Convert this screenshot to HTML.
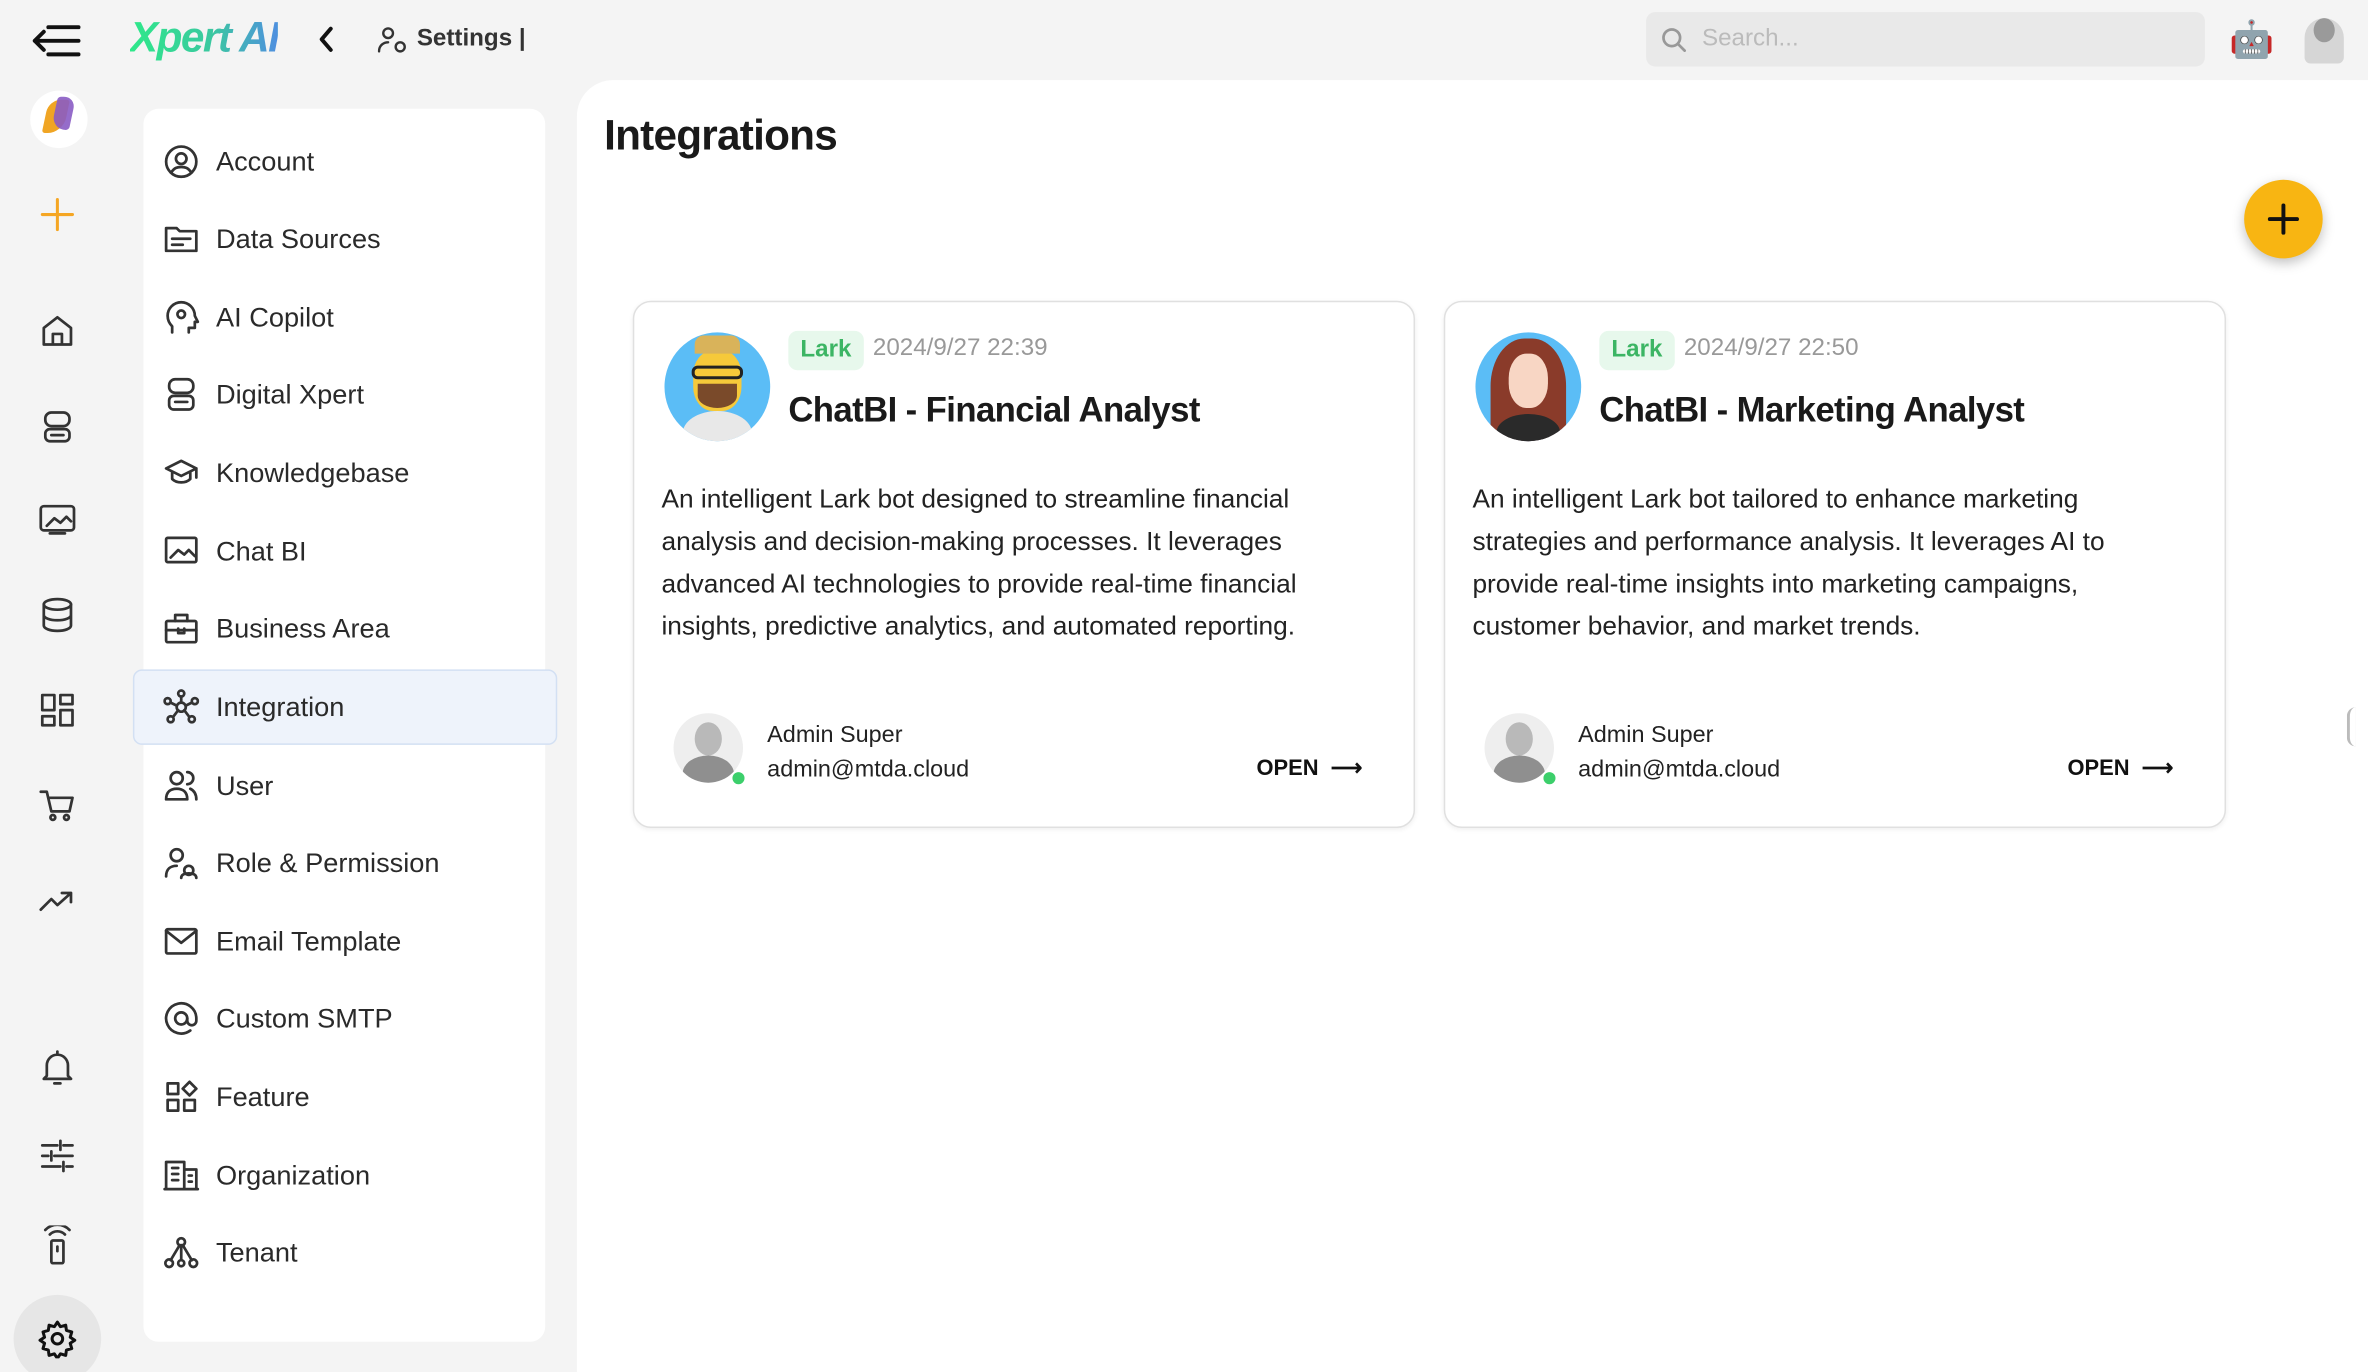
<!DOCTYPE html>
<html><head><meta charset="utf-8"><style>
*{box-sizing:border-box;margin:0;padding:0}
html,body{width:2368px;height:1372px;overflow:hidden;background:#f4f4f4}
#w{width:1568px;height:908px;transform:scale(1.5102,1.511);transform-origin:0 0;position:relative;font-family:"Liberation Sans",sans-serif;color:#222;background:#f4f4f4}
.a{position:absolute}
svg{fill:none;stroke:#333;stroke-width:1.8;stroke-linecap:round;stroke-linejoin:round}
.rail svg{position:absolute;left:25px;width:26px;height:26px}
.nav{left:95px;top:72px;width:266px;height:816px;background:#fff;border-radius:10px}
.it{position:absolute;left:13px;height:40px;display:flex;align-items:center;font-size:18px;color:#2a2a2a}
.it svg{width:24px;height:24px;margin-right:11px}
.main{left:382px;top:53px;width:1186px;height:855px;background:#fff;border-top-left-radius:24px}
.card{position:absolute;top:199px;width:518px;height:349px;border:1.5px solid #e0e0e0;border-radius:12px;background:#fff;box-shadow:0 1px 3px rgba(0,0,0,.06)}
.tag{position:absolute;left:102px;top:19px;background:#e7f8ec;color:#3cb564;font-weight:bold;font-size:16px;padding:4px 8px;border-radius:6px}
.date{position:absolute;left:158px;top:22px;color:#999;font-size:16px}
.ttl{position:absolute;left:102px;top:58px;font-weight:bold;font-size:23px;letter-spacing:-.4px;color:#1a1a1a}
.desc{position:absolute;left:18px;top:116px;width:470px;font-size:17.4px;line-height:28px;color:#222}
.who{position:absolute;left:88px;top:275px;font-size:15.5px;line-height:23px;color:#222}
.open{position:absolute;left:412px;top:301px;font-weight:bold;font-size:14.5px;color:#111}
.av{position:absolute;left:26px;top:272px;width:46px;height:46px;border-radius:50%;background:#eee;overflow:hidden}
.dot{position:absolute;left:64px;top:310px;width:10px;height:10px;border-radius:50%;background:#3ccf6b;border:1.5px solid #fff}
.face{position:absolute;left:20px;top:20px;width:70px;height:72px;border-radius:50%;overflow:hidden}
</style></head><body><div id="w">
<!-- top bar -->
<svg class="a" style="left:20px;top:16px;width:34px;height:22px;stroke:#111;stroke-width:2.6" viewBox="0 0 34 22"><path d="M12 2H32M3 11H32M12 20H32M3 11L9 5M3 11l6 6"/></svg>
<div class="a" style="left:86px;top:9px;font-size:28px;font-weight:bold;font-style:italic;letter-spacing:-1px;background:linear-gradient(90deg,#2fe88a,#3bc8a0 55%,#4f8fe0);-webkit-background-clip:text;color:transparent">Xpert AI</div>
<svg class="a" style="left:208px;top:16px;width:16px;height:20px;stroke:#111;stroke-width:2.6" viewBox="0 0 16 20"><path d="M11 3L5 10l6 7"/></svg>
<svg class="a" style="left:250px;top:17px;width:22px;height:20px;stroke-width:1.6" viewBox="0 0 22 20"><circle cx="7" cy="5" r="3.2"/><path d="M1 17c0-4 3-6 6-6"/><circle cx="15" cy="14" r="3"/></svg>
<div class="a" style="left:276px;top:17px;font-size:16px;font-weight:bold;color:#333">Settings |</div>
<div class="a" style="left:1090px;top:8px;width:370px;height:36px;background:#e9e9e9;border-radius:6px"></div>
<svg class="a" style="left:1100px;top:18px;width:17px;height:17px;stroke:#999" viewBox="0 0 17 17"><circle cx="7" cy="7" r="5.5"/><path d="M11 11l4.5 4.5"/></svg>
<div class="a" style="left:1127px;top:17px;font-size:16px;color:#bbb">Search...</div>
<div class="a" style="left:1476px;top:14px;width:28px;height:26px;font-size:24px;line-height:26px">🤖</div>
<div class="a" style="left:1526px;top:12px;width:26px;height:30px;border-radius:13px 13px 4px 4px;background:#d6d6d6"></div>
<div class="a" style="left:1532px;top:12px;width:14px;height:16px;border-radius:50%;background:#9a9a9a"></div>
<!-- rail -->
<div class="rail">
<div class="a" style="left:20px;top:60px;width:38px;height:38px;border-radius:50%;background:#fff"></div>
<div class="a" style="left:30px;top:66px;width:14px;height:22px;background:#f0a524;border-radius:8px 2px 10px 2px;transform:skewX(-12deg)"></div>
<div class="a" style="left:36px;top:64px;width:12px;height:22px;background:#8a5cc4;border-radius:2px 8px 2px 10px;transform:skewX(-12deg);opacity:.9"></div>
<svg style="top:129px;stroke:#f5a623;stroke-width:2" viewBox="0 0 26 26"><path d="M13 3v20M3 13h20"/></svg>
<svg style="top:206px" viewBox="0 0 26 26"><path d="M4 11l9-7 9 7v11H4zM10 22v-7h6v7"/></svg>
<svg style="top:269px" viewBox="0 0 26 26"><rect x="5" y="4" width="16" height="9" rx="4"/><rect x="5" y="15" width="16" height="8" rx="3"/><path d="M9 19h8"/></svg>
<svg style="top:331px" viewBox="0 0 26 26"><rect x="2" y="4" width="22" height="16" rx="2"/><path d="M6 17l5-5 4 3 4-4 3 3M8 22h10"/></svg>
<svg style="top:394px" viewBox="0 0 26 26"><ellipse cx="13" cy="6" rx="9" ry="3.5"/><path d="M4 6v14c0 2 4 3.5 9 3.5s9-1.5 9-3.5V6M4 13c0 2 4 3.5 9 3.5s9-1.5 9-3.5"/></svg>
<svg style="top:457px" viewBox="0 0 26 26"><rect x="3" y="3" width="8" height="10"/><rect x="15" y="3" width="8" height="6"/><rect x="3" y="17" width="8" height="6"/><rect x="15" y="13" width="8" height="10"/></svg>
<svg style="top:520px" viewBox="0 0 26 26"><path d="M2 4h4l3 13h12l2-9H8"/><circle cx="10" cy="21" r="1.6"/><circle cx="19" cy="21" r="1.6"/></svg>
<svg style="top:583px" viewBox="0 0 26 26"><path d="M2 19l7-7 4 4 9-8M16 8h6v6"/></svg>
<svg style="top:694px" viewBox="0 0 26 26"><path d="M6 18V11a7 7 0 0114 0v7l2 2H4zM11 23h4M13 2v2"/></svg>
<svg style="top:752px" viewBox="0 0 26 26"><path d="M3 6h10M17 6h6M3 13h4M11 13h12M3 20h12M19 20h4M15 3v6M9 10v6M17 17v6"/></svg>
<svg style="top:811px" viewBox="0 0 26 26"><rect x="9" y="10" width="8" height="15" rx="1"/><path d="M13 14v3M8 6a7 7 0 0110 0M5 3a11 11 0 0116 0"/></svg>
<div class="a" style="left:9px;top:857px;width:58px;height:58px;border-radius:50%;background:#e6e6e6"></div>
<svg style="top:873px;stroke:#111;stroke-width:2" viewBox="0 0 26 26"><circle cx="13" cy="13" r="3.5"/><path d="M13 2l2 3 3.5-1 .5 3.5 3.5 1-1 3.5 3 2-3 2 1 3.5-3.5 1-.5 3.5-3.5-1-2 3-2-3-3.5 1-.5-3.5-3.5-1 1-3.5-3-2 3-2-1-3.5 3.5-1 .5-3.5 3.5 1z"/></svg>
</div>
<!-- nav -->
<div class="a nav">
<div class="a" style="left:-7px;top:371px;width:281px;height:50px;background:#eef3fb;border:1.5px solid #d3e0f3;border-radius:6px"></div>
<div class="it" style="top:15px"><svg viewBox="0 0 24 24"><circle cx="12" cy="12" r="10"/><circle cx="12" cy="10" r="3.5"/><path d="M5.5 19c2-3 4-3.5 6.5-3.5s4.5.5 6.5 3.5"/></svg>Account</div>
<div class="it" style="top:66px"><svg viewBox="0 0 24 24"><path d="M2 5h7l2 2h11v13H2z"/><path d="M6 12h12M6 16h7"/></svg>Data Sources</div>
<div class="it" style="top:118px"><svg viewBox="0 0 24 24"><path d="M6 22v-4c-2-2-3-4-3-7a9 9 0 0118 0l2 4h-2v4h-4v3"/><circle cx="12" cy="10" r="2.5"/></svg>AI Copilot</div>
<div class="it" style="top:169px"><svg viewBox="0 0 24 24"><rect x="4" y="2" width="16" height="9" rx="4"/><rect x="4" y="13" width="16" height="9" rx="3"/><path d="M8 17h8"/></svg>Digital Xpert</div>
<div class="it" style="top:221px"><svg viewBox="0 0 24 24"><path d="M12 4l10 5-10 5L2 9zM6 11v5c3 3 9 3 12 0v-5M22 9v6"/></svg>Knowledgebase</div>
<div class="it" style="top:273px"><svg viewBox="0 0 24 24"><rect x="2" y="3" width="20" height="16" rx="1"/><path d="M5 16l5-5 4 3 3-3 4 4"/></svg>Chat BI</div>
<div class="it" style="top:324px"><svg viewBox="0 0 24 24"><rect x="2" y="7" width="20" height="14" rx="1"/><path d="M8 7V3h8v4M2 13h20M10 12v3h4v-3"/></svg>Business Area</div>
<div class="it" style="top:376px"><svg viewBox="0 0 24 24"><circle cx="12" cy="12" r="3"/><circle cx="12" cy="3" r="2"/><circle cx="3" cy="8" r="2"/><circle cx="21" cy="8" r="2"/><circle cx="5" cy="20" r="2"/><circle cx="19" cy="20" r="2"/><path d="M12 5v4M5 9l4 2M19 9l-4 2M7 18l3-4M17 18l-3-4"/></svg>Integration</div>
<div class="it" style="top:428px"><svg viewBox="0 0 24 24"><circle cx="9" cy="7" r="4"/><path d="M2 21c0-5 3-7 7-7s7 2 7 7zM16 3a4 4 0 010 8M18 14c2 1 4 3 4 7"/></svg>User</div>
<div class="it" style="top:479px"><svg viewBox="0 0 24 24"><circle cx="9" cy="7" r="4"/><path d="M2 21c0-5 3-7 7-7"/><circle cx="17" cy="17" r="3"/><path d="M12 22c0-2 2-3 5-3s5 1 5 3"/></svg>Role &amp; Permission</div>
<div class="it" style="top:531px"><svg viewBox="0 0 24 24"><rect x="2" y="4" width="20" height="16" rx="1"/><path d="M2 5l10 8 10-8"/></svg>Email Template</div>
<div class="it" style="top:582px"><svg viewBox="0 0 24 24"><circle cx="12" cy="12" r="4"/><path d="M16 12v1.5a3 3 0 006 0V12a10 10 0 10-4 8"/></svg>Custom SMTP</div>
<div class="it" style="top:634px"><svg viewBox="0 0 24 24"><rect x="3" y="3" width="7" height="7"/><rect x="3" y="14" width="7" height="7"/><rect x="14" y="14" width="7" height="7"/><path d="M17.5 2l4.5 4.5-4.5 4.5L13 6.5z"/></svg>Feature</div>
<div class="it" style="top:686px"><svg viewBox="0 0 24 24"><path d="M2 21V3h12v18M14 8h8v13M1 21h22M6 7h4M6 11h4M6 15h4M17 12h2M17 16h2"/></svg>Organization</div>
<div class="it" style="top:737px"><svg viewBox="0 0 24 24"><circle cx="12" cy="5" r="2.5"/><circle cx="4" cy="19" r="2.5"/><circle cx="20" cy="19" r="2.5"/><circle cx="12" cy="19" r="2"/><path d="M11 7l-6 10M13 7l6 10M12 7v10"/></svg>Tenant</div>
</div>
<div class="a" style="left:389px;top:468px;width:4px;height:24px;border-radius:2px;background:#ccc"></div>
<!-- main -->
<div class="a main"></div>
<div class="a" style="left:400px;top:74px;font-size:28px;font-weight:bold;letter-spacing:-.5px;color:#1a1a1a">Integrations</div>
<div class="a" style="left:1486px;top:119px;width:52px;height:52px;border-radius:50%;background:#f8b512;box-shadow:0 3px 8px rgba(0,0,0,.25)"></div>
<svg class="a" style="left:1500px;top:133px;width:24px;height:24px;stroke:#111;stroke-width:2.6" viewBox="0 0 24 24"><path d="M12 3v18M3 12h18"/></svg>
<div class="a" style="left:1554px;top:468px;width:6px;height:26px;border-left:2px solid #bbb;border-radius:6px 0 0 6px"></div>

<div class="card" style="left:419px">
<div class="face" style="background:#5bbdf6"><div class="a" style="left:12px;top:52px;width:46px;height:30px;border-radius:50%;background:#e8e8e8"></div><div class="a" style="left:19px;top:12px;width:32px;height:40px;border-radius:40%;background:#f6c93a"></div><div class="a" style="left:22px;top:34px;width:26px;height:16px;border-radius:0 0 50% 50%;background:#7a4a2a"></div><div class="a" style="left:18px;top:22px;width:34px;height:9px;border:2.5px solid #222;border-radius:4px"></div><div class="a" style="left:20px;top:2px;width:30px;height:12px;background:#d9b35a;border-radius:6px 6px 0 0"></div></div>
<div class="tag">Lark</div><div class="date">2024/9/27 22:39</div>
<div class="ttl">ChatBI - Financial Analyst</div>
<div class="desc">An intelligent Lark bot designed to streamline financial analysis and decision-making processes. It leverages advanced AI technologies to provide real-time financial insights, predictive analytics, and automated reporting.</div>
<div class="av"><div class="a" style="left:14px;top:6px;width:18px;height:22px;border-radius:50%;background:#b9b9b9"></div><div class="a" style="left:6px;top:28px;width:34px;height:24px;border-radius:50%;background:#8f8f8f"></div></div><div class="dot"></div>
<div class="who">Admin Super<br>admin@mtda.cloud</div>
<div class="open">OPEN &nbsp;⟶</div>
</div>
<div class="card" style="left:956px">
<div class="face" style="background:#5bbdf6"><div class="a" style="left:10px;top:4px;width:50px;height:70px;border-radius:45% 45% 10% 10%;background:#8a3b2a"></div><div class="a" style="left:22px;top:14px;width:26px;height:36px;border-radius:45%;background:#f8d6c4"></div><div class="a" style="left:14px;top:54px;width:42px;height:24px;border-radius:50%;background:#2a2a2a"></div></div>
<div class="tag">Lark</div><div class="date">2024/9/27 22:50</div>
<div class="ttl">ChatBI - Marketing Analyst</div>
<div class="desc">An intelligent Lark bot tailored to enhance marketing strategies and performance analysis. It leverages AI to provide real-time insights into marketing campaigns, customer behavior, and market trends.</div>
<div class="av"><div class="a" style="left:14px;top:6px;width:18px;height:22px;border-radius:50%;background:#b9b9b9"></div><div class="a" style="left:6px;top:28px;width:34px;height:24px;border-radius:50%;background:#8f8f8f"></div></div><div class="dot"></div>
<div class="who">Admin Super<br>admin@mtda.cloud</div>
<div class="open">OPEN &nbsp;⟶</div>
</div>
</div></body></html>
